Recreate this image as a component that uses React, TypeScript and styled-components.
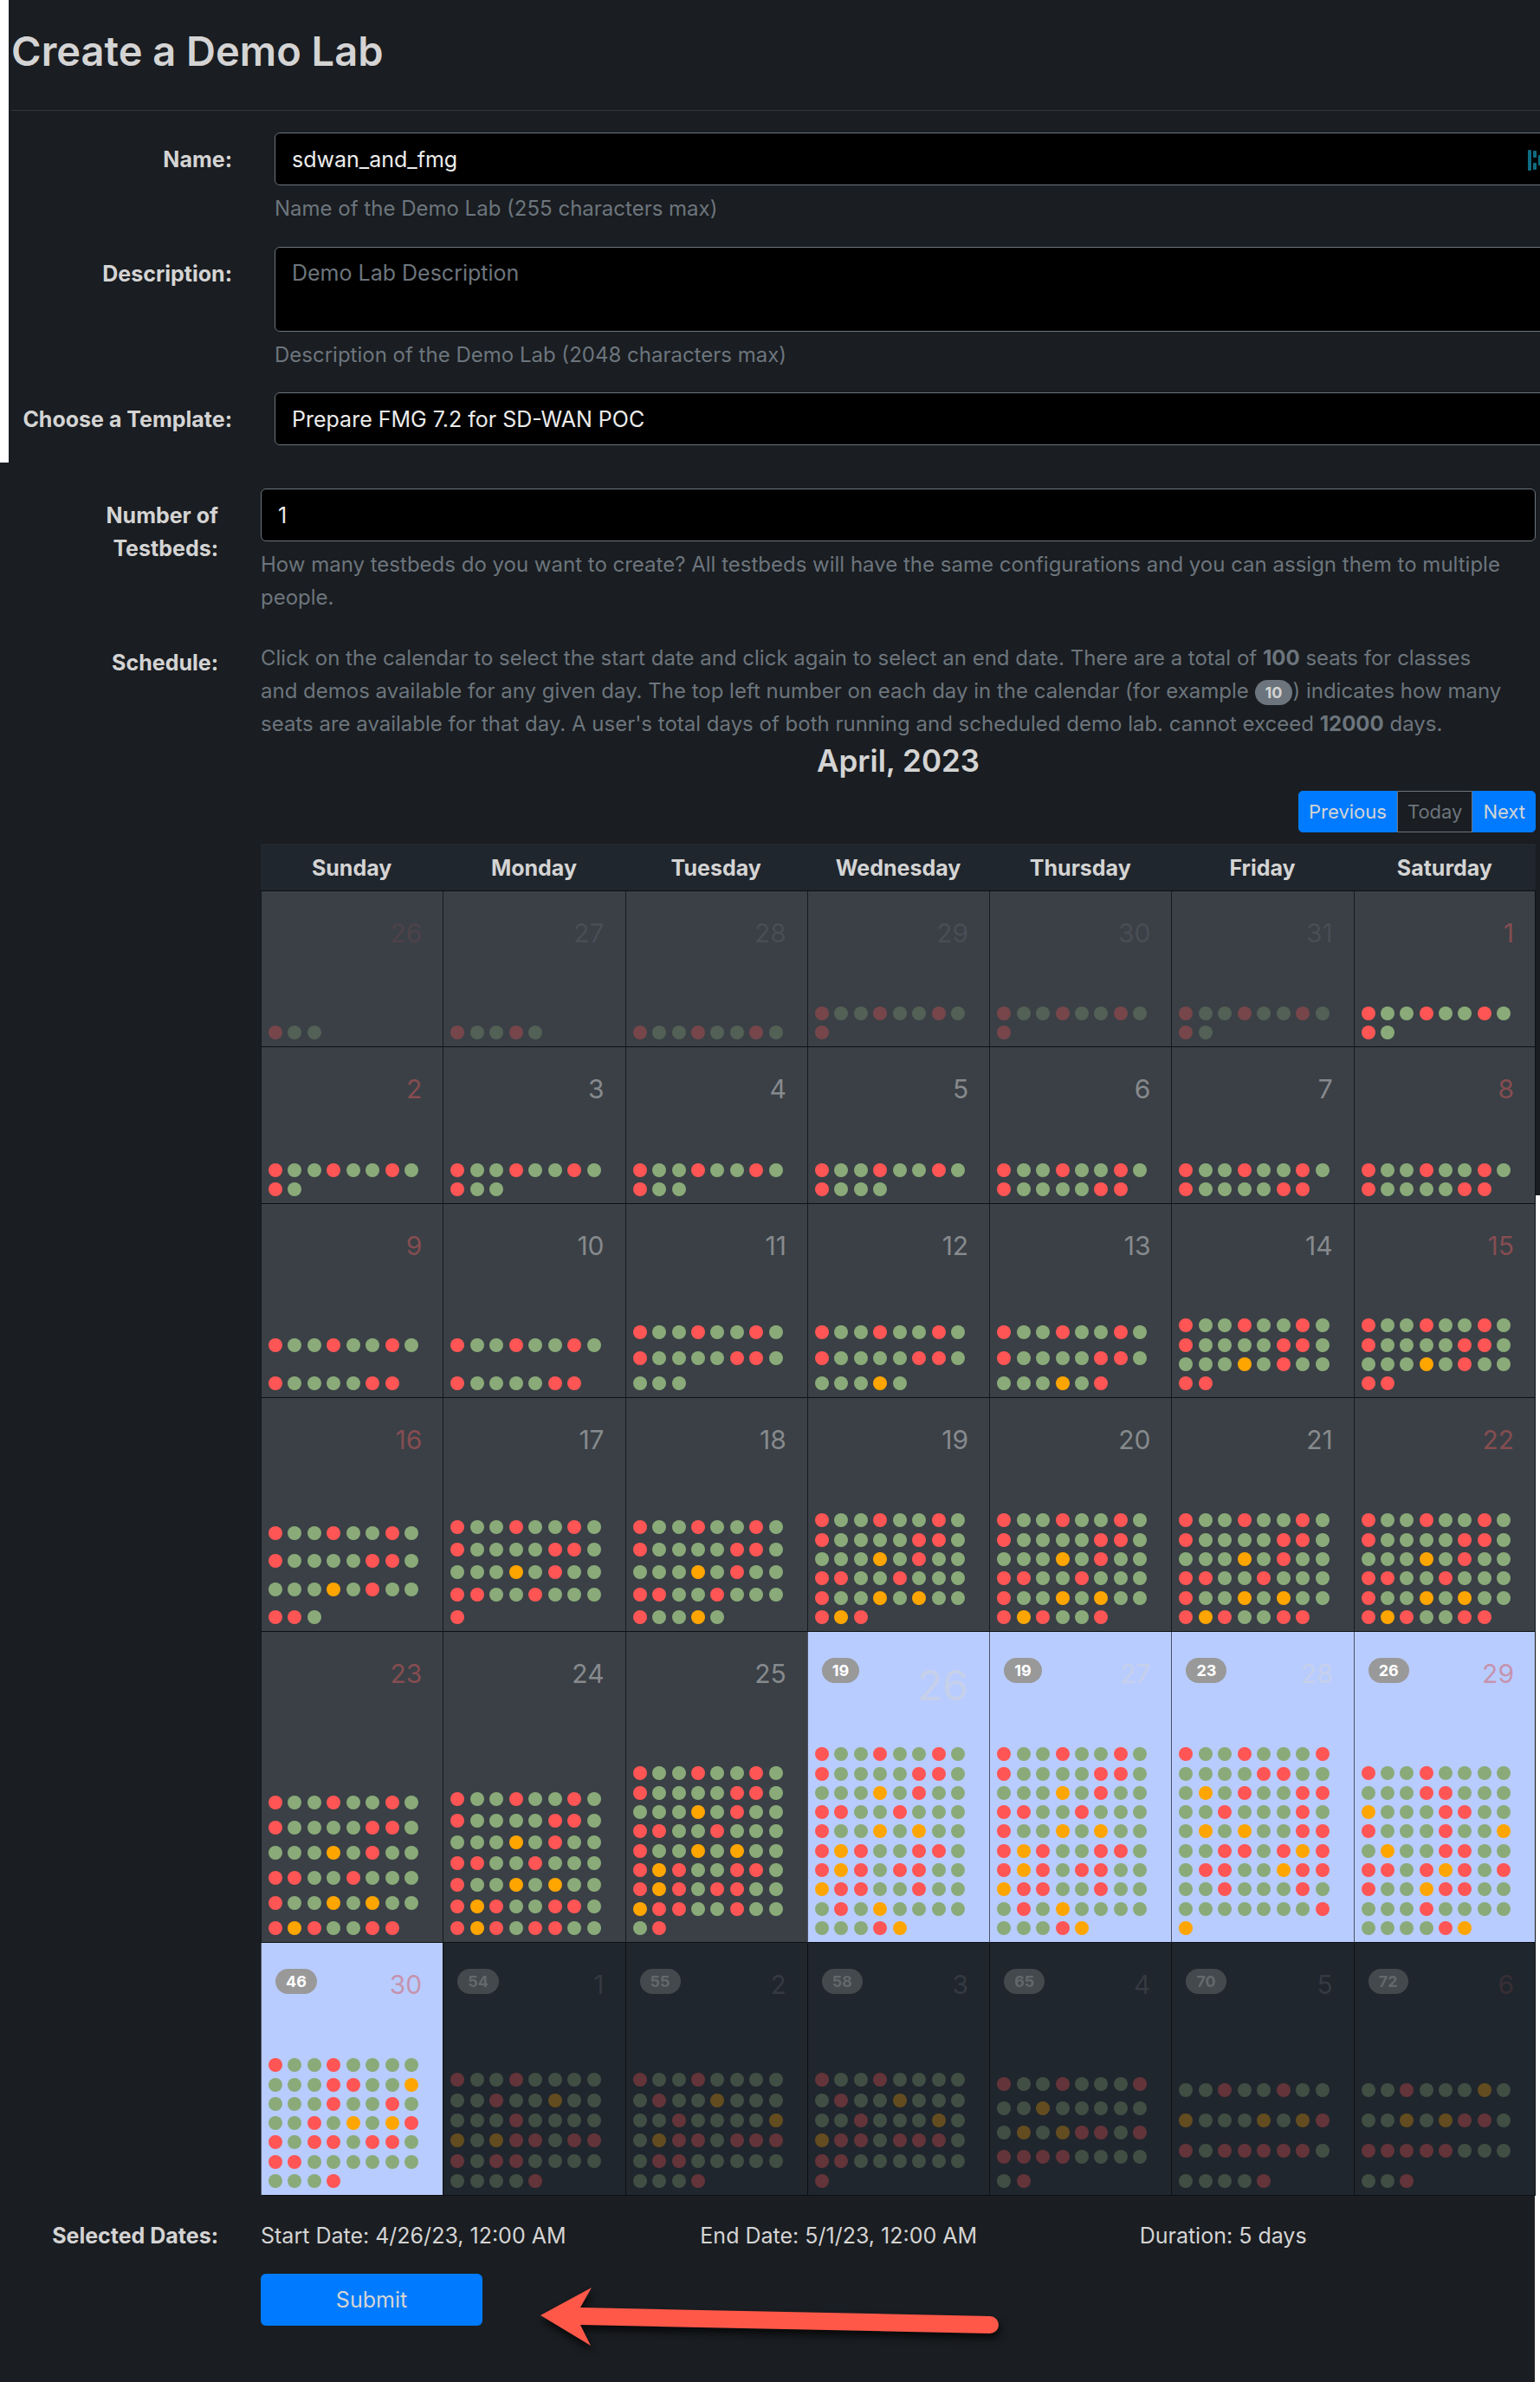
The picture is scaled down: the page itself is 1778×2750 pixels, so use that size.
import React from "react";
import styled, { createGlobalStyle } from "styled-components";

const color = {
  page: "#1a1d21",
  text: "#d4d4d4",
  muted: "#6c757d",
  field: "#000000",
  primary: "#007bff",
  past: "#3a4046",
  future: "#20262d",
  selected: "#b9ccff",
  line: "#0d1114",
};

const GlobalStyle = createGlobalStyle`
  *, *::before, *::after { box-sizing: border-box; }
  body {
    margin: 0;
    background: #ffffff;
    color: ${color.text};
    font-family: Inter, "Liberation Sans", sans-serif;
    font-size: 25px;
    line-height: 38px;
  }
  button, input, textarea, select { font: inherit; }
`;

const Page = styled.main`
  display: flex;
  flex-direction: column;
  min-height: 100vh;
`;

const DetailsPanel = styled.section`
  margin-left: 10px;
  padding-bottom: 20px;
  overflow: hidden;
  background: ${color.page};
`;

const Title = styled.h1`
  margin: 0;
  padding: 28px 0 37px 3px;
  font-size: 47px;
  line-height: 62px;
  font-weight: 600;
`;

const Rule = styled.hr`
  margin: 0 0 25px 3px;
  border: 0;
  border-top: 1px solid #313438;
`;

const DetailsFields = styled.div`
  margin-right: -8px;
  padding-left: 6px;
`;

const SchedulePanel = styled.section`
  flex: 1;
  padding: 30px 5px 0 0;
  background: linear-gradient(#ffffff, #ffffff) right bottom / 6px calc(100% - 846px) no-repeat ${color.page};
`;

const Row = styled.div<{ $gap?: number }>`
  display: grid;
  grid-template-columns: 252px minmax(0, 1fr);
  column-gap: 49px;
  margin-bottom: ${(p) => p.$gap ?? 0}px;
`;

const labelStyle = `
  padding-top: 12px;
  text-align: right;
  font-weight: 700;
`;
const Label = styled.label`${labelStyle}`;
const Caption = styled.div`${labelStyle}`;

const fieldStyle = `
  display: block;
  width: 100%;
  margin: 0;
  padding: 10px 19px;
  border: 1px solid ${color.muted};
  border-radius: 6px;
  background: ${color.field};
  color: #ececec;
  outline: none;
  appearance: none;
`;
const Input = styled.input`${fieldStyle} height: 61px;`;
const Select = styled.select`${fieldStyle} height: 61px;`;
const TextArea = styled.textarea`
  ${fieldStyle}
  height: 98px;
  resize: vertical;
  &::placeholder { color: ${color.muted}; opacity: 1; }
`;

const Help = styled.p`
  margin: 8px 0 0;
  color: ${color.muted};
  font-size: 24px;
`;

const InputWrap = styled.div`
  position: relative;
`;
const FillIcon = styled.svg`
  position: absolute;
  top: 20px;
  right: -6px;
`;

const Intro = styled.p`
  margin: 0;
  padding-top: 7px;
  color: ${color.muted};
  font-size: 24px;
`;

const Badge = styled.span<{ $bg: string; $fg: string }>`
  display: inline-block;
  height: 29px;
  padding: 0 12px;
  border-radius: 15px;
  background: ${(p) => p.$bg};
  color: ${(p) => p.$fg};
  font-size: 18px;
  line-height: 29px;
  font-weight: 700;
`;

const Month = styled.h2`
  margin: 0;
  font-size: 35px;
  line-height: 46px;
  font-weight: 600;
  text-align: center;
`;

const ButtonGroup = styled.div`
  display: flex;
  justify-content: flex-end;
  margin: 12px 0 13px;
`;
const NavButton = styled.button<{ $outline?: boolean }>`
  height: 48px;
  padding: 0 11px;
  border: 1px solid ${(p) => (p.$outline ? color.muted : color.primary)};
  background: ${(p) => (p.$outline ? "transparent" : color.primary)};
  color: ${(p) => (p.$outline ? color.muted : color.text)};
  font-size: 22px;
  line-height: 32px;
  &:first-child { border-radius: 5px 0 0 5px; }
  &:last-child { border-radius: 0 5px 5px 0; }
`;

const Calendar = styled.table`
  display: block;
  margin-bottom: 27px;
  thead, tbody { display: block; }
`;
const WeekRow = styled.tr`
  display: grid;
  grid-template-columns: repeat(7, minmax(0, 1fr));
`;
const DayHead = styled.th`
  padding: 9px 0 7px;
  border-bottom: 1px solid ${color.line};
  background: ${color.future};
  font-weight: 700;
`;
const DayCell = styled.td<{ $bg: string; $h: number }>`
  display: flex;
  flex-direction: column;
  justify-content: space-between;
  min-height: ${(p) => p.$h}px;
  padding: 0 0 8px;
  border-left: 1px solid rgba(0, 0, 0, 0.6);
  border-bottom: 1px solid ${color.line};
  background: ${(p) => p.$bg};
  &:last-child { border-right: 1px solid ${color.line}; }
`;
const DayTop = styled.div`
  display: flex;
  align-items: flex-start;
  padding: 30px 24px 0 16px;
`;
const BadgeSlot = styled.span<{ $dim: boolean }>`
  display: flex;
  opacity: ${(p) => (p.$dim ? 0.3 : 1)};
`;
const DayNumber = styled.span<{ $tone: string; $big: boolean }>`
  margin-left: auto;
  color: ${(p) => p.$tone};
  font-size: ${(p) => (p.$big ? 48 : 30)}px;
  line-height: ${(p) => (p.$big ? 64 : 36)}px;
`;
const Dots = styled.div<{ $dim: boolean }>`
  display: grid;
  grid-template-columns: repeat(8, 16px);
  grid-auto-rows: minmax(0, 1fr);
  justify-content: space-between;
  align-items: end;
  margin: 0 28px 0 8px;
  opacity: ${(p) => (p.$dim ? 0.3 : 1)};
`;
const Dot = styled.i<{ $c: string }>`
  width: 16px;
  height: 16px;
  border-radius: 50%;
  background: ${(p) => p.$c};
`;

const Dates = styled.div`
  display: grid;
  grid-template-columns: repeat(3, minmax(0, 1fr));
  column-gap: 50px;
`;
const DateText = styled.span``;
const DatesCaption = styled.div`
  text-align: right;
  font-weight: 700;
`;
const Actions = styled.div`
  display: flex;
  align-items: flex-start;
`;
const Submit = styled.button`
  width: 256px;
  height: 60px;
  border: 0;
  border-radius: 6px;
  background: ${color.primary};
  color: ${color.text};
`;
const Arrow = styled.svg`
  margin: 10px 0 0 67px;
  overflow: visible;
  filter: drop-shadow(2px 6px 4px rgba(0, 0, 0, 0.7));
`;

const dotColor: Record<string, string> = { R: "#ff5555", G: "#8aab79", O: "#ffa500" };

type Day = { n: number; dots: string; seats?: number; out?: boolean; selected?: boolean; start?: boolean };
type Week = { height: number; spread: number; days: Day[] };

const L = ["RGGRGGRG", "RGGGGRRG", "GGGOGRGG", "RRGGRGGG", "RGGOGOGG", "RORGGRRG", "RORGRRGG", "ORRGGRGG"];
const after = (rows: number, rest: string) => L.slice(0, rows).join("") + rest;

const weeks: Week[] = [
  {
    height: 180,
    spread: 0,
    days: [
      { n: 26, out: true, dots: "RGG" },
      { n: 27, out: true, dots: "RGGRG" },
      { n: 28, out: true, dots: after(1, "") },
      { n: 29, out: true, dots: after(1, "R") },
      { n: 30, out: true, dots: after(1, "R") },
      { n: 31, out: true, dots: after(1, "RG") },
      { n: 1, dots: after(1, "RG") },
    ],
  },
  {
    height: 181,
    spread: 0,
    days: [
      { n: 2, dots: after(1, "RG") },
      { n: 3, dots: after(1, "RGG") },
      { n: 4, dots: after(1, "RGG") },
      { n: 5, dots: after(1, "RGGG") },
      { n: 6, dots: after(1, "RGGGGRR") },
      { n: 7, dots: after(1, "RGGGGRR") },
      { n: 8, dots: after(1, "RGGGGRR") },
    ],
  },
  {
    height: 224,
    spread: 88,
    days: [
      { n: 9, dots: after(1, "RGGGGRR") },
      { n: 10, dots: after(1, "RGGGGRR") },
      { n: 11, dots: after(2, "GGG") },
      { n: 12, dots: after(2, "GGGOG") },
      { n: 13, dots: after(2, "GGGOGR") },
      { n: 14, dots: after(3, "RR") },
      { n: 15, dots: after(3, "RR") },
    ],
  },
  {
    height: 270,
    spread: 130,
    days: [
      { n: 16, dots: after(3, "RRG") },
      { n: 17, dots: after(4, "R") },
      { n: 18, dots: after(4, "RGGOG") },
      { n: 19, dots: after(5, "ROR") },
      { n: 20, dots: after(5, "RORGGR") },
      { n: 21, dots: after(5, "RORGGRR") },
      { n: 22, dots: after(5, "RORGGRR") },
    ],
  },
  {
    height: 359,
    spread: 174,
    days: [
      { n: 23, dots: after(5, "RORGGRR") },
      { n: 24, dots: after(7, "") },
      { n: 25, dots: after(8, "GR") },
      { n: 26, seats: 19, selected: true, start: true, dots: after(8, "GRGOGGGGGGGRO") },
      { n: 27, seats: 19, selected: true, dots: after(8, "GRGOGGGGGGGRO") },
      {
        n: 28, seats: 23, selected: true,
        dots: "RGGRGGGR" + "GGGGRRGG" + "GOGRGGRR" + "GGRGGGRG" + "GOGOGGRR" + "GGRRGROR" + "GRRGGORR" + "GGRGGGRG" + "GGGGGGGR" + "O",
      },
      {
        n: 29, seats: 26, selected: true,
        dots: "RGGRGGGG" + "GGGRRGGG" + "OGGGRRGG" + "RGGGRGGO" + "GOGGRRGG" + "RRGRORGR" + "RGGORRGG" + "GGGRGGGG" + "GGGGRO",
      },
    ],
  },
  {
    height: 292,
    spread: 140,
    days: [
      { n: 30, seats: 46, selected: true, dots: "RGGRGGGG" + "GGGRRGGO" + "GGGRGGRG" + "GGRGOGOR" + "RGRRGRRG" + "RRGGGGGG" + "GGGR" },
      { n: 1, seats: 54, out: true, dots: "RGGRGGGG" + "GGRGGOGG" + "GGGRGGGG" + "OGORRGRR" + "RGRRGGGG" + "GGGGR" },
      { n: 2, seats: 55, out: true, dots: "RGGRGGGG" + "GRGGOGGG" + "GGRGGGGO" + "GORRGRRR" + "GRRGGGGG" + "GGGR" },
      { n: 3, seats: 58, out: true, dots: "RGGRGGGG" + "GRGGOGGG" + "GGRGGGOG" + "ORRGRRRG" + "RRGGGGGG" + "R" },
      { n: 4, seats: 65, out: true, dots: "RGGRGGGR" + "GGOGGGGG" + "GOGORRGR" + "RRRRGGGG" + "GR" },
      { n: 5, seats: 70, out: true, dots: "GGRGGRGG" + "OGGGOGOR" + "RGRRRRRG" + "GGGGR" },
      { n: 6, seats: 72, out: true, dots: "GGRGGGOG" + "GGOGORRG" + "RRRRRGGG" + "GGR" },
    ],
  },
];

const weekdays = ["Sunday", "Monday", "Tuesday", "Wednesday", "Thursday", "Friday", "Saturday"];

function CalendarDay({ day, week, column }: { day: Day; week: Week; column: number }) {
  const weekend = column === 0 || column === 6;
  const out = Boolean(day.out);
  const bg = day.selected ? color.selected : day.seats ? color.future : color.past;
  const tone = out
    ? weekend ? "rgba(150, 76, 84, 0.22)" : "rgba(132, 126, 145, 0.22)"
    : weekend ? "rgba(210, 90, 92, 0.5)" : "rgba(212, 212, 212, 0.5)";
  // Fewer lines of dots spread out over the week's common height.
  const lines = Math.ceil(day.dots.length / 8);
  const dotsHeight = lines === 1 ? 16 : Math.max(week.spread, Math.round((lines * 67) / 3));
  return (
    <DayCell $bg={bg} $h={week.height}>
      <DayTop>
        {day.seats !== undefined && (
          <BadgeSlot $dim={out}>
            <Badge $bg="#999999" $fg="#ffffff">{day.seats}</Badge>
          </BadgeSlot>
        )}
        <DayNumber $tone={tone} $big={Boolean(day.start)}>{day.n}</DayNumber>
      </DayTop>
      <Dots $dim={out} style={{ height: dotsHeight }}>
        {day.dots.split("").map((d, i) => <Dot key={i} $c={dotColor[d]} />)}
      </Dots>
    </DayCell>
  );
}

export default function App() {
  return (
    <>
      <GlobalStyle />
      <Page>
        <DetailsPanel>
          <Title>Create a Demo Lab</Title>
          <Rule />
          <DetailsFields>
            <Row $gap={25}>
              <Label htmlFor="name">Name:</Label>
              <div>
                <InputWrap>
                  <Input id="name" defaultValue="sdwan_and_fmg" />
                  <FillIcon width="28" height="24" viewBox="0 0 28 24" fill="#0f6b80" aria-hidden="true">
                    <rect x="0" y="0" width="4" height="24" rx="1" />
                    <rect x="6" y="1" width="4" height="8" rx="1" />
                    <rect x="6" y="15" width="4" height="8" rx="1" />
                    <rect x="12" y="6" width="4" height="12" rx="1" />
                  </FillIcon>
                </InputWrap>
                <Help>Name of the Demo Lab (255 characters max)</Help>
              </div>
            </Row>
            <Row $gap={24}>
              <Label htmlFor="description">Description:</Label>
              <div>
                <TextArea id="description" placeholder="Demo Lab Description" />
                <Help>Description of the Demo Lab (2048 characters max)</Help>
              </div>
            </Row>
            <Row>
              <Label htmlFor="template">Choose a Template:</Label>
              <Select id="template">
                <option>Prepare FMG 7.2 for SD-WAN POC</option>
              </Select>
            </Row>
          </DetailsFields>
        </DetailsPanel>

        <SchedulePanel>
          <Row $gap={25}>
            <Label htmlFor="testbeds">Number of<br />Testbeds:</Label>
            <div>
              <Input id="testbeds" inputMode="numeric" defaultValue="1" />
              <Help>
                How many testbeds do you want to create? All testbeds will have the same configurations and you can
                assign them to multiple people.
              </Help>
            </div>
          </Row>
          <Row>
            <Caption>Schedule:</Caption>
            <div>
              <Intro>
                Click on the calendar to select the start date and click again to select an end date. There are a total
                of <strong>100</strong> seats for classes<br />and demos available for any given day. The top left
                number on each day in the calendar (for example <Badge $bg={color.muted} $fg={color.text}>10</Badge>)
                indicates how many seats are available for that day. A user's total days of both running and scheduled
                demo lab. cannot exceed <strong>12000</strong> days.
              </Intro>
              <Month>April, 2023</Month>
              <ButtonGroup>
                <NavButton type="button">Previous</NavButton>
                <NavButton type="button" $outline>Today</NavButton>
                <NavButton type="button">Next</NavButton>
              </ButtonGroup>
              <Calendar>
                <thead>
                  <WeekRow>
                    {weekdays.map((d) => <DayHead key={d} scope="col">{d}</DayHead>)}
                  </WeekRow>
                </thead>
                <tbody>
                  {weeks.map((week, w) => (
                    <WeekRow key={w}>
                      {week.days.map((day, i) => <CalendarDay key={i} day={day} week={week} column={i} />)}
                    </WeekRow>
                  ))}
                </tbody>
              </Calendar>
            </div>
          </Row>
          <Row $gap={25}>
            <DatesCaption>Selected Dates:</DatesCaption>
            <Dates>
              <DateText>Start Date: 4/26/23, 12:00 AM</DateText>
              <DateText>End Date: 5/1/23, 12:00 AM</DateText>
              <DateText>Duration: 5 days</DateText>
            </Dates>
          </Row>
          <Row>
            <span />
            <Actions>
              <Submit type="submit">Submit</Submit>
              <Arrow width="530" height="76" viewBox="0 0 530 76" fill="#ff5849" aria-hidden="true">
                <path d="M0 38 L59 6 L46 29 L519 39 A10 10 0 0 1 519 59 L46 49 L58 73 Z" />
              </Arrow>
            </Actions>
          </Row>
        </SchedulePanel>
      </Page>
    </>
  );
}
